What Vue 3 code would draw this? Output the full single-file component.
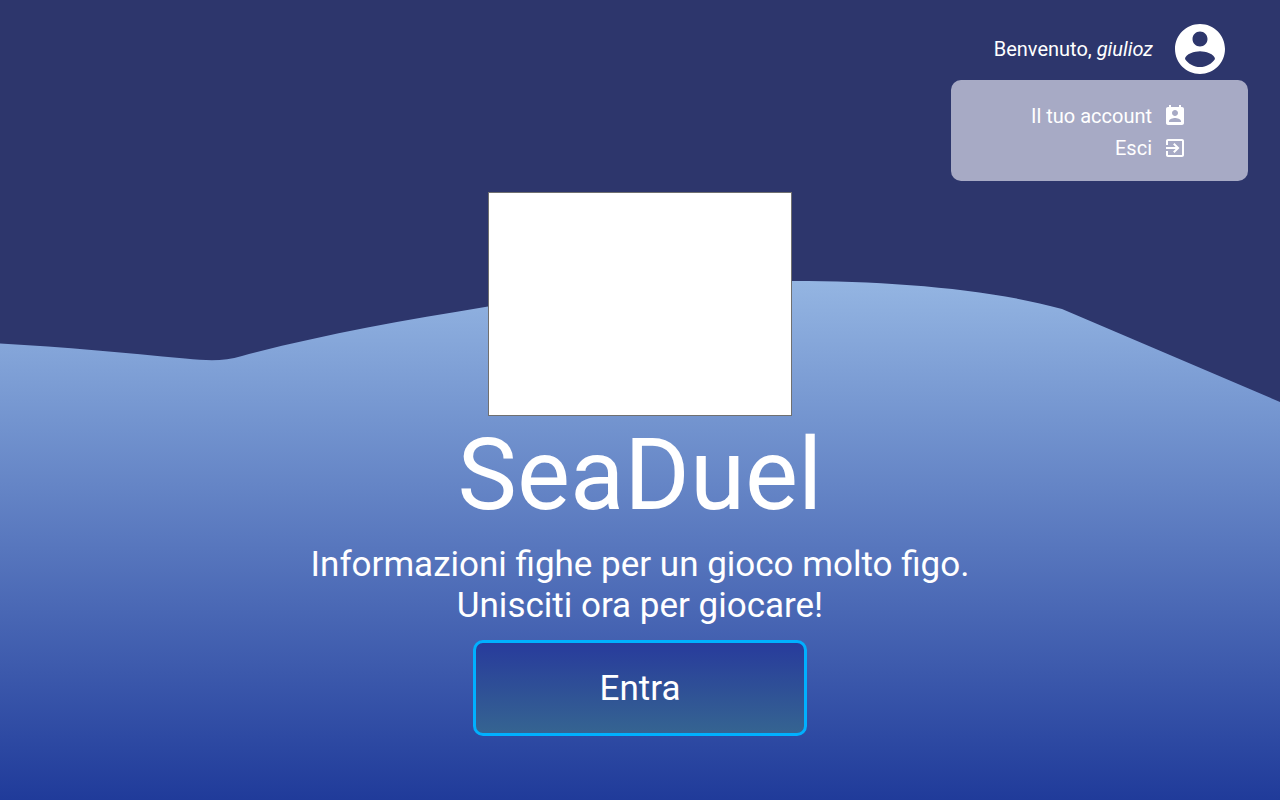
<script setup>
const menu = [
  {
    label: 'Il tuo account',
    path: 'M19 3h-1V1h-2v2H8V1H6v2H5c-1.11 0-2 .9-2 2v14c0 1.1.89 2 2 2h14c1.1 0 2-.9 2-2V5c0-1.1-.9-2-2-2zm-7 3c1.66 0 3 1.34 3 3s-1.34 3-3 3-3-1.34-3-3 1.34-3 3-3zm6 12H6v-1c0-2 4-3.1 6-3.1s6 1.1 6 3.1v1z'
  },
  {
    label: 'Esci',
    path: 'M10.09 15.59L11.5 17l5-5-5-5-1.41 1.41L12.67 11H3v2h9.67l-2.58 2.59zM19 3H5c-1.11 0-2 .9-2 2v4h2V5h14v14H5v-4H3v4c0 1.1.89 2 2 2h14c1.1 0 2-.9 2-2V5c0-1.1-.9-2-2-2z'
  }
]
</script>

<template>
  <div class="page">
    <svg class="sea" viewBox="0 0 1280 520" preserveAspectRatio="none" aria-hidden="true">
      <defs>
        <linearGradient id="water" x1="0" y1="0" x2="0" y2="1">
          <stop offset="0" stop-color="#94b5e2" />
          <stop offset="0.27" stop-color="#7394cf" />
          <stop offset="1" stop-color="#203b9a" />
        </linearGradient>
      </defs>
      <path fill="url(#water)" d="M0 63.500C65 67 125 73 185 78.500C211 81 224 81 242 76C320 55 400 41 488 26.500C590 9 690 1 793 1C890 1 990 9 1062 29L1280 122V520H0Z" />
    </svg>

    <header class="account">
      <div class="greeting">
        <span>Benvenuto, <em>giulioz</em></span>
        <button class="avatar" type="button" aria-label="Account">
          <svg viewBox="2 2 20 20" aria-hidden="true">
            <path d="M12 2C6.48 2 2 6.48 2 12s4.48 10 10 10 10-4.48 10-10S17.52 2 12 2zm0 3c1.66 0 3 1.34 3 3s-1.34 3-3 3-3-1.34-3-3 1.34-3 3-3zm0 14.2c-2.5 0-4.71-1.28-6-3.22.03-1.99 4-3.08 6-3.08 1.99 0 5.97 1.09 6 3.08-1.29 1.94-3.5 3.22-6 3.22z" />
          </svg>
        </button>
      </div>
      <nav class="menu">
        <a v-for="item in menu" :key="item.label" href="#">
          {{ item.label }}
          <svg viewBox="0 0 24 24" aria-hidden="true"><path :d="item.path" /></svg>
        </a>
      </nav>
    </header>

    <main class="hero">
      <div class="logo"></div>
      <h1>SeaDuel</h1>
      <p>Informazioni fighe per un gioco molto figo.<br>Unisciti ora per giocare!</p>
      <button class="enter" type="button">Entra</button>
    </main>
  </div>
</template>

<style>
body {
  background: #2d366c;
}
</style>

<style scoped>
.page {
  position: relative;
  box-sizing: border-box;
  min-height: 100vh;
  padding: 192px 32px 64px;
  overflow: hidden;
  background: #2d366c;
  color: #fff;
  font-family: Roboto, sans-serif;
}
.sea {
  position: absolute;
  left: 0;
  bottom: 0;
  width: 100%;
  height: 65%;
}
.account {
  position: absolute;
  top: 24px;
  right: 32px;
  font-size: 20px;
}
.greeting {
  display: flex;
  align-items: center;
  justify-content: flex-end;
  gap: 22px;
  padding-right: 23px;
}
.avatar {
  width: 50px;
  height: 50px;
  padding: 0;
  border: 0;
  background: none;
  cursor: pointer;
}
svg {
  display: block;
  fill: currentColor;
}
.avatar svg {
  width: 50px;
  height: 50px;
  color: #fff;
}
.menu {
  box-sizing: border-box;
  width: 297px;
  margin-top: 6px;
  padding: 20px 61px 17px;
  border-radius: 10px;
  background: #a7aac5;
}
.menu a {
  display: flex;
  align-items: center;
  justify-content: flex-end;
  gap: 11px;
  height: 32px;
  color: #fff;
  text-decoration: none;
}
.menu svg {
  width: 24px;
  height: 24px;
}
.hero {
  position: relative;
  display: flex;
  flex-direction: column;
  align-items: center;
  text-align: center;
}
.logo {
  box-sizing: border-box;
  width: 304px;
  height: 224px;
  border: 1px solid #707070;
  background: #fff;
}
h1 {
  margin: 0;
  font-size: 100px;
  font-weight: 400;
  line-height: 117px;
}
p {
  margin: 11px 0 0;
  font-size: 35px;
  line-height: 41px;
}
.enter {
  box-sizing: border-box;
  width: 334px;
  height: 96px;
  margin-top: 14px;
  border: 3px solid #00b0ff;
  border-radius: 10px;
  background: linear-gradient(#283b9c, #356491);
  color: inherit;
  font: inherit;
  font-size: 35px;
  cursor: pointer;
}
</style>
